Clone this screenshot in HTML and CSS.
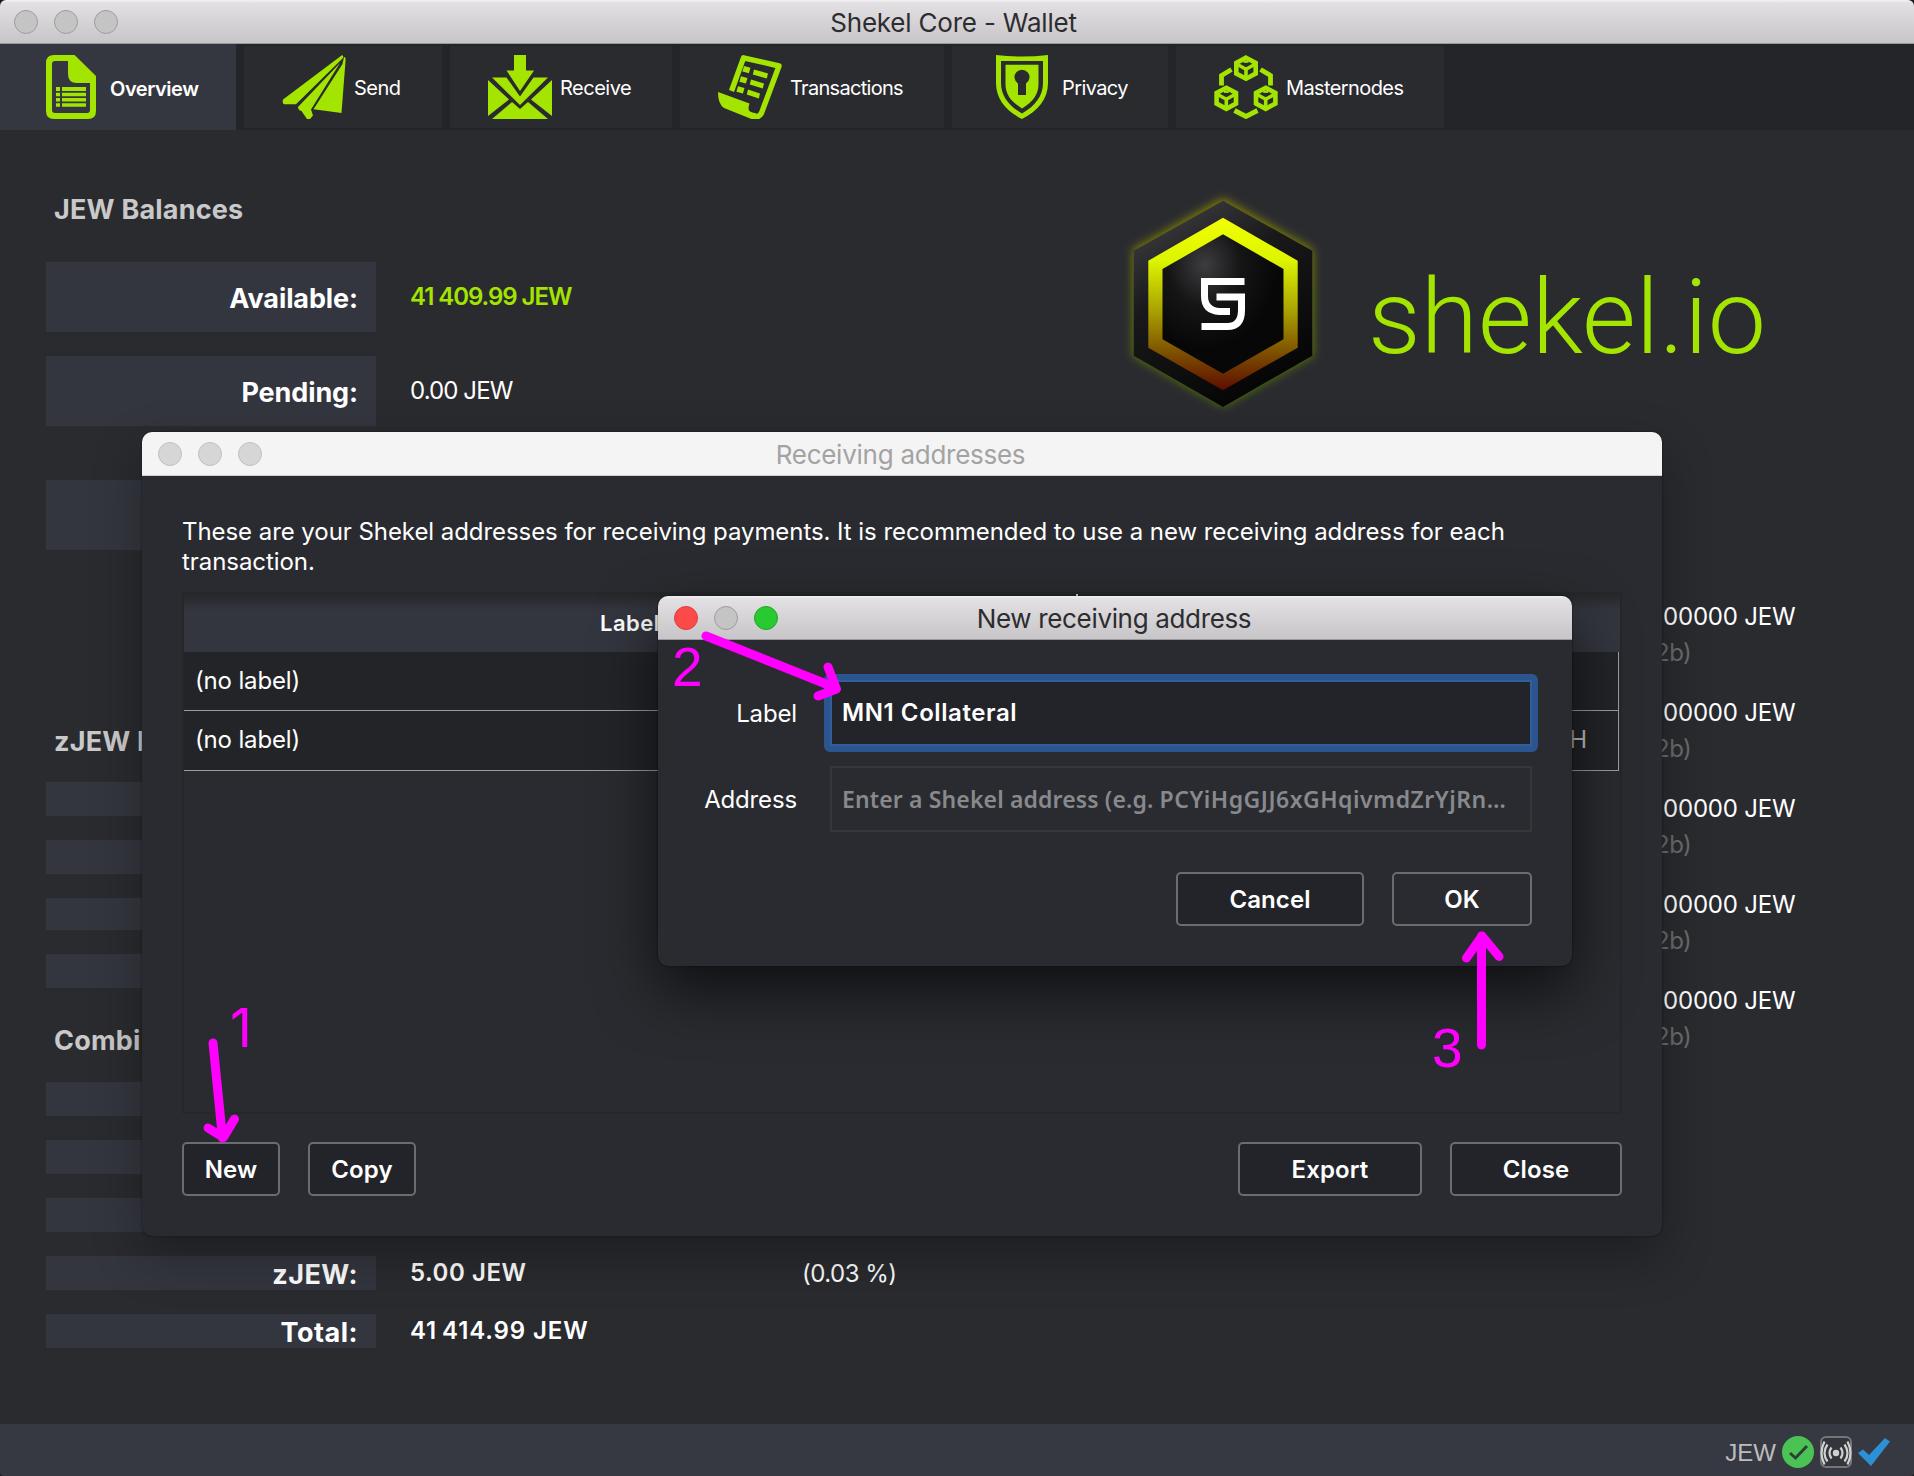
FILE: index.html
```html
<!DOCTYPE html>
<html lang="en">
<head>
<meta charset="utf-8">
<title>Shekel Core - Wallet</title>
<link rel="stylesheet" href="styles.css">
</head>
<body>
<div class="app">
  <header class="titlebar">
    <div class="lights"><i></i><i></i><i></i></div>
    <span class="title-main">Shekel Core - Wallet</span>
  </header>

  <nav class="tabs">
    <div class="tab tab-active">
      <svg class="tab-icon" viewBox="0 0 64 64"><path d="M36.6 0H16Q8 0 8 8v48q0 8 8 8h34q8 0 8-8V21zM30 6v13q0 9 9 9h13v27q0 3-3 3H17q-3 0-3-3V9q0-3 3-3z" fill-rule="evenodd"/><path d="M18 32h4v4h-4zM24 32h24v4H24zM18 37.8h4v3.4h-4zM24 37.8h24v3.4H24zM18 43h4v3.4h-4zM24 43h24v3.4H24zM18 48.2h4v3.6h-4zM24 48.2h24v3.6H24z"/></svg>
      <span>Overview</span>
    </div>
    <div class="tab tab-send">
      <svg class="tab-icon" viewBox="0 0 64 64"><path d="M59.5.4Q62 0 61 3L14 49.2H2Q0 48 1 44.500z"/><path d="M58 8L16 52q0 3 3.500 4l5.500 8h3l3-3.500-2-6z"/><path d="M62 2q1.800 0 1.600 3L59.500 58 31.500 54.300 60.500 9z"/></svg>
      <span>Send</span>
    </div>
    <div class="tab tab-receive">
      <svg class="tab-icon" viewBox="0 0 64 64"><path d="M26 0h12v15.500h8L32 36 18.500 15.500H26z"/><path d="M4 22.500h14.500L32 41.500l13.500-19H60L32 50z"/><path d="M0 25l21 19.500L0 61zM64 25L43 44.500 64 61zM4 64l20-17 8 7 8-7 20 17z"/></svg>
      <span>Receive</span>
    </div>
    <div class="tab tab-transactions">
      <svg class="tab-icon" viewBox="0 0 64 64"><path d="M13.500 36L25.500 2.800 61 11 43.500 58q-2.500 5-8 3.500" fill="none" stroke="#a3e400" stroke-width="5.400" stroke-linejoin="round"/><path d="M0 37l31.500 11.500q-3 8 3 9l4 1-1 5.500h-4L6 53Q0 49 0 37z"/><path d="M26 11l6.500 1.700-1.600 5.600-6.500-1.700zM23 21.200l6.500 1.700-1.600 5.600-6.500-1.700zM20 31.200l6.500 1.700-1.600 5.600-6.500-1.700zM36 14.500l14 4-1.200 5-14-4zM33 24.500l13 4-1.200 5-13-4zM30 34.500l12 4-1.200 5-12-4z"/></svg>
      <span>Transactions</span>
    </div>
    <div class="tab tab-privacy">
      <svg class="tab-icon" viewBox="0 0 64 64"><path d="M6 0q26 3 52 0v28c0 16-10 28-26 36C16 56 6 44 6 28zM11 6v22c0 13 8 23 21 30.500C45 51 53 41 53 28V6z" fill-rule="evenodd"/><path d="M15.500 9.700h33V29c0 11-6 18-16.500 24.500C21.500 47 15.500 40 15.500 29zM28 28.500V40h8V28.500a7.500 7.500 0 1 0-8 0z" fill-rule="evenodd"/></svg>
      <span>Privacy</span>
    </div>
    <div class="tab tab-masternodes">
      <svg class="tab-icon" viewBox="0 0 64 64"><defs><g id="cube" fill="none" stroke="#a3e400" stroke-width="4.600"><path d="M0-10.500L9.700-5.300v10.600L0 10.500-9.700 5.300V-5.300z"/><path d="M-9-4L0 1l9-5M0 1v10" stroke-width="3.600"/><path d="M-2.500-6.500h5" stroke-width="2.200"/></g></defs><use href="#cube" x="32" y="13.200"/><use href="#cube" x="12.300" y="43.300"/><use href="#cube" x="51.700" y="43.300"/><path d="M17.500 14.500L7.500 20.500v10M46.500 14.500l10 6v10M20.500 55.500L32 61.500l11.500-6" fill="none" stroke="#a3e400" stroke-width="4.800"/></svg>
      <span>Masternodes</span>
    </div>
  </nav>

  <main class="overview">
    <section class="balances">
      <h2>JEW Balances</h2>
      <div class="rows rows-tall">
        <div class="row"><b class="name">Available:</b><span class="value value-green">41 409.99 JEW</span></div>
        <div class="row"><b class="name">Pending:</b><span class="value value-tight">0.00 JEW</span></div>
        <div class="row row-total"><b class="name"></b></div>
      </div>
      <h2 class="heading-z">zJEW B</h2>
      <div class="rows rows-z">
        <div class="row"><b class="name"></b></div>
        <div class="row"><b class="name"></b></div>
        <div class="row"><b class="name"></b></div>
        <div class="row"><b class="name"></b></div>
      </div>
      <h2 class="heading-combined">Combi</h2>
      <div class="rows rows-combined">
        <div class="row"><b class="name"></b></div>
        <div class="row"><b class="name"></b></div>
        <div class="row"><b class="name"></b></div>
        <div class="row"><b class="name">zJEW:</b><b class="value value-wide">5.00 JEW</b><span class="percent">(0.03 %)</span></div>
        <div class="row"><b class="name">Total:</b><b class="value value-wide value-sum">41&#8201;414.99 JEW</b></div>
      </div>
    </section>

    <section class="side">
      <div class="brand">
        <svg class="brand-mark" viewBox="0 0 220 240">
          <defs>
            <linearGradient id="ring" x1="0" y1="0" x2="0" y2="1"><stop offset="0" stop-color="#f2ff00"/><stop offset=".25" stop-color="#dcf500"/><stop offset=".55" stop-color="#a89e00"/><stop offset=".8" stop-color="#7a4a00"/><stop offset="1" stop-color="#5e0c00"/></linearGradient>
            <linearGradient id="stone" x1="0" y1="0" x2=".5" y2="1"><stop offset="0" stop-color="#47474b"/><stop offset=".45" stop-color="#19191b"/><stop offset="1" stop-color="#060606"/></linearGradient>
            <linearGradient id="halo" x1="0" y1="0" x2="0" y2="1"><stop offset="0" stop-color="#8a8600"/><stop offset="1" stop-color="#4f7a10"/></linearGradient>
            <radialGradient id="core" cx=".35" cy=".22" r=".6"><stop offset="0" stop-color="#3d3d40"/><stop offset=".5" stop-color="#151516"/><stop offset="1" stop-color="#070707"/></radialGradient>
            <filter id="soft" x="-20%" y="-20%" width="140%" height="140%"><feGaussianBlur stdDeviation="5"/></filter>
          </defs>
          <path d="M110 18.500l90 51v106l-90 51-90-51v-106z" fill="url(#halo)" filter="url(#soft)"/>
          <path d="M110 20.700l89.300 50v105L110 227l-89.300-51.300v-105z" fill="url(#stone)"/>
          <path d="M110 37.700l74.700 43v87L110 210.300l-74.700-42.600v-87z" fill="url(#ring)"/>
          <path d="M110 54.300L170.500 89v70.300L110 193.700l-60.500-34.400V89z" fill="url(#core)"/>
          <path d="M131.500 101.500H91.500V116q0 14.500 15 15.500H117M103.500 117h25v13q0 16.500-14 16.500H88.500" fill="none" stroke="#fff" stroke-width="7"/>
        </svg>
        <span class="brand-name">shekel.io</span>
      </div>
      <ul class="recent">
        <li><span>00000 JEW</span><em>2b)</em></li>
        <li><span>00000 JEW</span><em>2b)</em></li>
        <li><span>00000 JEW</span><em>2b)</em></li>
        <li><span>00000 JEW</span><em>2b)</em></li>
        <li><span>00000 JEW</span><em>2b)</em></li>
      </ul>
    </section>
  </main>

  <footer class="statusbar">
    <span>JEW</span>
    <svg viewBox="0 0 32 32"><circle cx="16" cy="16" r="16" fill="#4bc354"/><path d="M8 17l5.500 5L25 10" fill="none" stroke="#2e4038" stroke-width="3"/></svg>
    <svg viewBox="0 0 32 32"><rect x="1" y="1" width="30" height="30" rx="5" fill="#33353b" stroke="#75767a" stroke-width="2"/><circle cx="16" cy="17" r="3.200" fill="#d0d0d0"/><path d="M11.500 11.500q-4 5.500 0 11M20.500 11.500q4 5.500 0 11M7.500 8.500q-6 8.500 0 17M24.500 8.500q6 8.500 0 17M4.500 5.500q-6 11.500 0 23M27.500 5.500q6 11.500 0 23" fill="none" stroke="#d0d0d0" stroke-width="2.200"/></svg>
    <svg viewBox="0 0 32 32"><path d="M0 17l5-3.500 6 5.500L27 2l5 3.500L13 30z" fill="#2d8fd5"/></svg>
  </footer>
</div>

<div class="window receiving">
  <header class="titlebar titlebar-inactive">
    <div class="lights"><i></i><i></i><i></i></div>
    <span class="title-receiving">Receiving addresses</span>
  </header>
  <div class="receiving-body">
    <p>These are your Shekel addresses for receiving payments. It is recommended to use a new receiving address for each<br>transaction.</p>
    <div class="table">
      <div class="thead"><b>Label</b><i class="sort"></i></div>
      <div class="trow"><span>(no label)</span></div>
      <div class="trow"><span>(no label)</span><span class="addr">H</span></div>
    </div>
    <div class="actions">
      <button class="btn btn-new">New</button>
      <button class="btn btn-copy">Copy</button>
      <button class="btn btn-export">Export</button>
      <button class="btn btn-close">Close</button>
    </div>
  </div>
</div>

<div class="window dialog">
  <header class="titlebar">
    <div class="lights"><i class="red"></i><i></i><i class="green"></i></div>
    <span class="title-dialog">New receiving address</span>
  </header>
  <div class="form">
    <label>Label</label>
    <div class="field field-focus">MN1 Collateral</div>
    <label>Address</label>
    <div class="field field-hint">Enter a Shekel address (e.g. <span class="sample">PCYiHgGJJ6xGHqivmdZrYjRn</span>…</div>
  </div>
  <div class="form-actions">
    <button class="btn btn-cancel">Cancel</button>
    <button class="btn btn-ok">OK</button>
  </div>
</div>

<svg class="notes" viewBox="0 0 1914 1476">
  <g fill="none" stroke="#f0f" stroke-width="9" stroke-linecap="round" stroke-linejoin="round">
    <path d="M213 1043l9.500 95M208 1128l15.500 9.500L234.500 1119"/>
    <path d="M706 636l130 52M828 667l8.500 22L818 696"/>
    <path d="M1481.500 1045V936M1466.500 958l15.500-22 17 20.500"/>
  </g>
  <g class="note-digits">
    <text class="note-one" x="230" y="1047">1</text>
    <text x="672" y="686">2</text>
    <text x="1432" y="1067">3</text>
  </g>
</svg>
</body>
</html>
```
FILE: styles.css
```css
* { box-sizing: border-box; }

body {
  margin: 0;
  width: 1914px;
  height: 1476px;
  overflow: hidden;
  position: relative;
  background: #17191a;
  color: #fff;
  font: 24px/30px Inter, "Liberation Sans", sans-serif;
}

.app {
  height: 1476px;
  display: flex;
  flex-direction: column;
  background: #2a2b2f;
  border-radius: 6px 6px 4px 4px;
  overflow: hidden;
}

/* Title bars */
.titlebar {
  flex: none;
  height: 44px;
  padding: 0 16px;
  display: grid;
  align-items: center;
  justify-items: center;
  border-bottom: 1px solid #9a999b;
  background: linear-gradient(#f3f1f3 0, #e2e0e2 3px, #c7c5c8 100%);
  color: #2d2c2f;
  font-size: 26px;
}
.titlebar > * { grid-area: 1 / 1; }
.app > .titlebar { padding: 0 14px; }
.titlebar-inactive { background: #f4f4f4; border-color: #cfcfcf; color: #a3a3a3; }
.lights { justify-self: start; display: flex; gap: 16px; }
.lights i {
  width: 24px;
  height: 24px;
  border-radius: 50%;
  border: 1px solid #9d9c9e;
  background: #c5c4c5;
}
.titlebar-inactive .lights i { background: #d6d6d6; border-color: #c0c0c0; }
.lights .red { background: #fc4a48; border-color: #dc3c3c; }
.lights .green { background: #29c932; border-color: #1fa528; }
.title-main { letter-spacing: -.2px; margin-right: 7px; padding-top: 3px; }
.title-receiving { letter-spacing: -.26px; margin-right: 3px; padding-top: 3px; }
.title-dialog { letter-spacing: -.34px; margin-right: 2px; padding-top: 3px; }

/* Toolbar */
.tabs {
  flex: none;
  height: 86px;
  display: flex;
  align-items: center;
  gap: 8px;
  background: #242529;
  font-size: 20px;
  letter-spacing: -.5px;
}
.tab {
  height: 82px;
  padding-left: 38px;
  display: flex;
  align-items: center;
  gap: 8px;
  background: #2a2b2f;
}
.tab span { padding-top: 1px; }
.tab-active { width: 236px; height: 86px; background: #343740; font-weight: 600; letter-spacing: -.45px; }
.tab-active span { padding-top: 3px; }
.tab-send { width: 198px; }
.tab-receive { width: 222px; }
.tab-transactions { width: 264px; letter-spacing: -.7px; }
.tab-privacy { width: 216px; letter-spacing: -.6px; }
.tab-masternodes { width: 268px; letter-spacing: -.6px; }
.tab-icon { width: 64px; height: 64px; margin-top: -1px; fill: #a3e400; }

/* Overview page */
.overview { flex: 1; display: flex; justify-content: space-between; padding: 0 119px 0 46px; }
.balances { padding-top: 61px; width: 900px; }
h2 {
  margin: 0 0 33px 8px;
  font-size: 27px;
  line-height: 38px;
  font-weight: 700;
  letter-spacing: .2px;
  color: #c9c9ca;
}
.rows { display: grid; grid-auto-rows: 34px; gap: 24px; }
.rows-tall { grid-auto-rows: 70px; }
.row-total { margin-top: 30px; height: 70px; }
.row { display: flex; align-items: center; }
.name {
  width: 330px;
  height: 100%;
  padding: 4px 18px 0 0;
  display: flex;
  align-items: center;
  justify-content: flex-end;
  background: #34363f;
  font-size: 27px;
  font-weight: 700;
  letter-spacing: -.1px;
}
.rows-combined .name { letter-spacing: .5px; }
.value { width: 393px; margin: 0 0 0 34px; white-space: nowrap; font-weight: 400; }
.value-green { color: #a3e400; font-weight: 600; letter-spacing: -1.05px; }
.value-tight { letter-spacing: -.9px; }
.value-wide { font-weight: 600; letter-spacing: .55px; }
.value-sum { letter-spacing: .9px; }
.percent { letter-spacing: -.5px; padding-top: 2px; margin-left: -1px; }
.heading-z { margin: 203px 0 21px 8px; }
.rows-z { grid-template-rows: 34px 34px 32px 34px; }
.heading-combined { margin: 34px 0 22px 8px; }

/* Brand and recent list */
.side { width: 686px; padding-top: 50px; }
.brand { display: flex; }
.brand-mark { width: 220px; height: 240px; margin-left: 4px; flex: none; }
.brand-name {
  margin: 86px 0 0 35px;
  font: 300 104px/104px Roboto, "Liberation Sans", sans-serif;
  letter-spacing: .1px;
  color: #a3e400;
}
.recent { list-style: none; margin: 182px 0 0 554px; padding: 0; }
.recent li { height: 96px; display: grid; align-content: start; gap: 6px; white-space: nowrap; letter-spacing: -.2px; }
.recent em { margin-left: -8px; font-style: normal; letter-spacing: -.5px; color: #6a6b6d; }

/* Status bar */
.statusbar {
  flex: none;
  height: 52px;
  padding: 0 24px 0 0;
  display: flex;
  align-items: center;
  justify-content: flex-end;
  gap: 6px;
  background: #373942;
  color: #bdbdbf;
  font: 24px/30px "Liberation Sans", sans-serif;
}
.statusbar svg { width: 32px; height: 32px; margin-top: 4px; }
.statusbar span { padding-top: 6px; }

/* Floating windows */
.window { position: absolute; border-radius: 10px; background: #2a2b30; }
.window > .titlebar { border-radius: 10px 10px 0 0; }
.receiving {
  left: 142px;
  top: 432px;
  width: 1520px;
  height: 804px;
  box-shadow: 0 0 2px rgba(0, 0, 0, .6), 0 20px 50px rgba(0, 0, 0, .3);
}
.receiving-body { padding: 41px 40px 0; }
.receiving p { margin: 0 0 15px; letter-spacing: -.06px; white-space: nowrap; }
.table { height: 522px; border: 2px solid #26272a; }
.thead {
  height: 58px;
  display: flex;
  background: linear-gradient(#26272a 0, #32343c 14px, #34363f 18px);
  font-size: 22px;
  line-height: 58px;
}
.thead b { width: 892px; text-align: center; font-weight: 600; letter-spacing: .5px; }
.sort { width: 2px; height: 3px; background: #ddd; }
.trow {
  height: 59px;
  margin-right: 1px;
  padding: 0 31px 1px 11px;
  display: flex;
  align-items: center;
  justify-content: space-between;
  background: #232428;
  border: solid #9c9d9c;
  border-width: 0 1px 1px 0;
  letter-spacing: -.16px;
}
.trow + .trow { height: 60px; }
.addr { color: #c4c4c5; }
.actions { margin-top: 28px; display: flex; gap: 28px; }
.btn {
  height: 54px;
  padding: 2px 0 0;
  border: 2px solid #6b6c70;
  border-radius: 5px;
  background: #232429;
  color: #fff;
  font: 600 24px/48px Inter, "Liberation Sans", sans-serif;
  letter-spacing: .1px;
}
.btn-new { width: 98px; }
.btn-copy { width: 108px; }
.btn-export { width: 184px; margin-left: auto; }
.btn-close { width: 172px; }

.dialog {
  left: 658px;
  top: 596px;
  width: 914px;
  height: 370px;
  box-shadow: 0 0 2px rgba(0, 0, 0, .7), 0 24px 60px rgba(0, 0, 0, .65);
}
.form {
  padding: 34px 34px 0 0;
  display: grid;
  grid-template-columns: 139px 714px;
  column-gap: 27px;
  row-gap: 14px;
  align-items: center;
}
.form label { padding-top: 2px; text-align: right; letter-spacing: -.15px; }
.field { white-space: nowrap; }
.field-focus {
  height: 78px;
  padding: 3px 12px 0;
  line-height: 60px;
  border: 6px solid #2c558f;
  border-radius: 6px;
  background: #232429;
  box-shadow: inset 0 0 0 2px #315f9c;
  font-weight: 600;
  letter-spacing: .58px;
}
.field-hint {
  height: 66px;
  margin: 0 6px;
  padding: 0 10px;
  line-height: 62px;
  border: 2px solid #36373b;
  color: #88898c;
  font-family: "Noto Sans", "Open Sans", sans-serif;
  font-size: 23px;
  font-weight: 600;
  letter-spacing: .13px;
}
.sample { letter-spacing: .5px; }
.form-actions { padding: 40px 40px 0 0; display: flex; justify-content: flex-end; gap: 28px; }
.btn-cancel { width: 188px; }
.btn-ok { width: 140px; background: #2a2b30; }

/* Step annotations drawn over the windows */
.notes { position: absolute; left: 0; top: 0; width: 1914px; height: 1476px; }
.note-digits { fill: #f0f; font: 55px "Liberation Sans", Arial, sans-serif; }
.note-one { font: 54px Inter, sans-serif; }
```
